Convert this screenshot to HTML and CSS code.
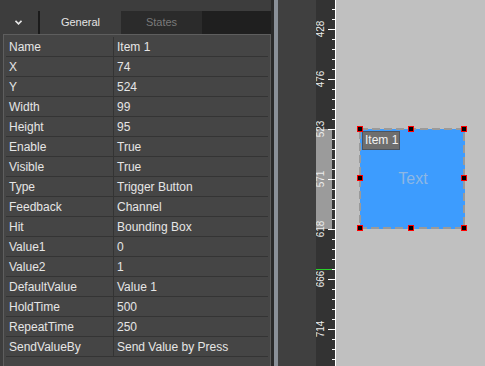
FILE: index.html
```html
<!DOCTYPE html>
<html>
<head>
<meta charset="utf-8">
<link rel="stylesheet" href="styles.css">
</head>
<body>
<div class="panel">
  <div class="tabs">
    <div class="tab-menu">
      <svg width="7" height="5" viewBox="0 0 7 5"><polyline points="0.5,0.8 3.5,3.8 6.5,0.8" fill="none" stroke="#e8e8e8" stroke-width="1.6"/></svg>
    </div>
    <div class="tab-sep"></div>
    <div class="tab active">General</div>
    <div class="tab">States</div>
    <div class="tab-fill"></div>
  </div>
  <div class="grid">
    <div class="row"><div class="key">Name</div><div class="val">Item 1</div></div>
    <div class="row"><div class="key">X</div><div class="val">74</div></div>
    <div class="row"><div class="key">Y</div><div class="val">524</div></div>
    <div class="row"><div class="key">Width</div><div class="val">99</div></div>
    <div class="row"><div class="key">Height</div><div class="val">95</div></div>
    <div class="row"><div class="key">Enable</div><div class="val">True</div></div>
    <div class="row"><div class="key">Visible</div><div class="val">True</div></div>
    <div class="row"><div class="key">Type</div><div class="val">Trigger Button</div></div>
    <div class="row"><div class="key">Feedback</div><div class="val">Channel</div></div>
    <div class="row"><div class="key">Hit</div><div class="val">Bounding Box</div></div>
    <div class="row"><div class="key">Value1</div><div class="val">0</div></div>
    <div class="row"><div class="key">Value2</div><div class="val">1</div></div>
    <div class="row"><div class="key">DefaultValue</div><div class="val">Value 1</div></div>
    <div class="row"><div class="key">HoldTime</div><div class="val">500</div></div>
    <div class="row"><div class="key">RepeatTime</div><div class="val">250</div></div>
    <div class="row"><div class="key">SendValueBy</div><div class="val">Send Value by Press</div></div>
  </div>
</div>
<div class="split-dark"></div>
<div class="split-light"></div>
<div class="gutter"></div>
<div class="ruler">
  <div class="ruler-sel"></div>
  <div class="ruler-minor"></div>
  <div class="ruler-mouse"></div>
  <div class="major" style="top:29px"></div><span class="rlabel" style="top:24px">428</span>
  <div class="major" style="top:79px"></div><span class="rlabel" style="top:74px">476</span>
  <div class="major" style="top:129px"></div><span class="rlabel" style="top:124px">523</span>
  <div class="major" style="top:179px"></div><span class="rlabel" style="top:174px">571</span>
  <div class="major" style="top:229px"></div><span class="rlabel" style="top:224px">618</span>
  <div class="major" style="top:279px"></div><span class="rlabel" style="top:274px">666</span>
  <div class="major" style="top:329px"></div><span class="rlabel" style="top:324px">714</span>
</div>
<div class="canvas">
  <div class="item">
    <span class="item-text">Text</span>
    <svg class="item-border" width="105" height="100" viewBox="0 0 105 100"><rect x="0" y="0" width="104" height="99" fill="none" stroke="#9a9a9a" stroke-width="2" stroke-dasharray="8 4"/></svg>
    <div class="tag">Item 1</div>
    <div class="handle h-tl"></div>
    <div class="handle h-tm"></div>
    <div class="handle h-tr"></div>
    <div class="handle h-ml"></div>
    <div class="handle h-mr"></div>
    <div class="handle h-bl"></div>
    <div class="handle h-bm"></div>
    <div class="handle h-br"></div>
  </div>
</div>
</body>
</html>
```

FILE: styles.css
```css
html, body {
  margin: 0;
  padding: 0;
}
body {
  width: 485px;
  height: 366px;
  overflow: hidden;
  display: flex;
  font-family: "Liberation Sans", Arial, sans-serif;
  background: #3d3d3d;
}
.panel {
  width: 271px;
  flex: none;
  background: #3d3d3d;
  padding-top: 11px;
  display: flex;
  flex-direction: column;
  box-sizing: border-box;
}
.tabs {
  height: 23px;
  display: flex;
  flex: none;
}
.tab-menu {
  width: 38px;
  display: flex;
  align-items: center;
  justify-content: center;
  padding-right: 2px;
  box-sizing: border-box;
}
.tab-menu svg { display: block; }
.tab-sep {
  width: 2px;
  background: #1b1b1b;
}
.tab {
  width: 81px;
  font-size: 11px;
  line-height: 23px;
  text-align: center;
  color: #7a7a7a;
  background: #2b2b2b;
}
.tab.active {
  background: #3d3d3d;
  color: #e4e4e4;
}
.tab-fill {
  flex: 1;
  background: #1f1f1f;
}
.grid {
  margin-left: 3px;
  flex: 1;
  background: #454545;
  border: 1px solid #5e5e5e;
  border-bottom: none;
  padding: 2px 2px 0;
}
.row {
  display: grid;
  grid-template-columns: 108px 1fr;
  height: 20px;
  border-bottom: 1px solid #343434;
  box-sizing: border-box;
  font-size: 12px;
  line-height: 19px;
  color: #e6e6e6;
  overflow: hidden;
}
.key {
  padding-left: 3px;
  padding-top: 1px;
  border-right: 1px solid #343434;
  white-space: nowrap;
}
.val {
  padding-left: 3px;
  padding-top: 1px;
  white-space: nowrap;
}
.split-dark {
  width: 3px;
  flex: none;
  background: #2a2a2a;
}
.split-light {
  width: 4px;
  flex: none;
  background: #8a9098;
}
.gutter {
  width: 38px;
  flex: none;
  background: #404040;
}
.ruler {
  width: 19px;
  flex: none;
  background: #333333;
  border-right: 1px solid #ffffff;
  position: relative;
  overflow: hidden;
}
.ruler-sel {
  position: absolute;
  left: 0;
  width: 16px;
  top: 129px;
  height: 100px;
  background: #9b9b9b;
}
.ruler-minor {
  position: absolute;
  right: 0;
  top: 0;
  bottom: 0;
  width: 3px;
  background: repeating-linear-gradient(to bottom, transparent 0 9px, #ffffff 9px 10px);
}
.ruler-mouse {
  position: absolute;
  left: 0;
  width: 16px;
  top: 269px;
  height: 1px;
  background: #2ad02a;
}
.major {
  position: absolute;
  right: 0;
  width: 7px;
  height: 1px;
  background: #ffffff;
}
.rlabel {
  position: absolute;
  left: -5px;
  width: 20px;
  height: 10px;
  font-size: 10px;
  line-height: 10px;
  text-align: center;
  color: #ececec;
  transform: rotate(-90deg);
}
.canvas {
  flex: 1;
  background: #c0c0c0;
  position: relative;
}
.item {
  position: absolute;
  left: 24px;
  top: 129px;
  width: 105px;
  height: 100px;
  background: #3d9cfe;
  display: flex;
  align-items: center;
  justify-content: center;
}
.item-text {
  font-size: 16px;
  color: #8db7e4;
  padding-left: 1px;
}
.item-border {
  position: absolute;
  left: 0;
  top: 0;
  overflow: visible;
}
.tag {
  position: absolute;
  left: 2px;
  top: 2px;
  width: 38px;
  height: 19px;
  box-sizing: border-box;
  background: #6e6e6e;
  border: 1px solid #4c5460;
  font-size: 12px;
  line-height: 17px;
  color: #f2f2f2;
  padding-left: 2px;
  white-space: nowrap;
}
.handle {
  position: absolute;
  width: 6px;
  height: 6px;
  box-sizing: border-box;
  background: #000000;
  border: 1px solid #ff0000;
}
.h-tl { left: -3px; top: -3px; }
.h-tm { left: 48px; top: -3px; }
.h-tr { left: 101px; top: -3px; }
.h-ml { left: -3px; top: 46px; }
.h-mr { left: 101px; top: 46px; }
.h-bl { left: -3px; top: 96px; }
.h-bm { left: 48px; top: 96px; }
.h-br { left: 101px; top: 96px; }
```
